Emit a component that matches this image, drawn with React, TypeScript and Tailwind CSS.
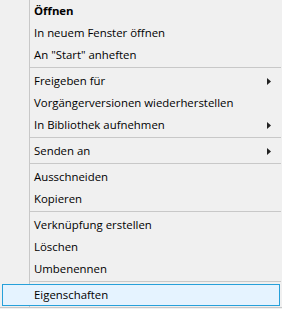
type Item = { label: string; bold?: boolean; sub?: boolean; active?: boolean }

const groups: Item[][] = [
  [{ label: 'Öffnen', bold: true }, { label: 'In neuem Fenster öffnen' }, { label: 'An "Start" anheften' }],
  [{ label: 'Freigeben für', sub: true }, { label: 'Vorgängerversionen wiederherstellen' }, { label: 'In Bibliothek aufnehmen', sub: true }],
  [{ label: 'Senden an', sub: true }],
  [{ label: 'Ausschneiden' }, { label: 'Kopieren' }],
  [{ label: 'Verknüpfung erstellen' }, { label: 'Löschen' }, { label: 'Umbenennen' }],
  [{ label: 'Eigenschaften', active: true }],
]

function Arrow() {
  return (
    <svg width="4" height="7" viewBox="0 0 4 7" className="absolute right-[11px] top-[8px]">
      <path d="M0 0 L4 3.5 L0 7 Z" fill="#222" />
    </svg>
  )
}

function Row({ item }: { item: Item }) {
  if (item.active) {
    return (
      <div className="relative mx-[2px] h-[22px] border border-[#26a0da] bg-[#e5f3ff] flex items-center pl-[31px] text-[11.4px] text-black">
        {item.label}
      </div>
    )
  }
  return (
    <div className={`relative h-[22px] flex items-center pl-[34px] text-[11.4px] text-black ${item.bold ? 'font-bold' : ''}`}>
      {item.label}
      {item.sub && <Arrow />}
    </div>
  )
}

export default function App() {
  return (
    <div className="w-[282px] h-[309px] bg-[#f0f0f0] overflow-hidden" style={{ fontFamily: '"Open Sans", "Noto Sans", sans-serif' }}>
      <div className="relative">
        {/* gutter line */}
        <div className="absolute left-[29px] top-0 bottom-0 w-px bg-[#c8c8c8]" />
        {groups.map((g, i) => (
          <div key={i}>
            {i > 0 && (
              <div className="h-[4px] pt-[1px] pl-[30px] pr-px">
                <div className="h-px bg-[#c8c8c8]" />
              </div>
            )}
            {g.map((item) => (
              <Row key={item.label} item={item} />
            ))}
          </div>
        ))}
        <div className="h-[1px]" />
        <div className="h-px bg-[#c8c8c8]" />
      </div>
    </div>
  )
}
